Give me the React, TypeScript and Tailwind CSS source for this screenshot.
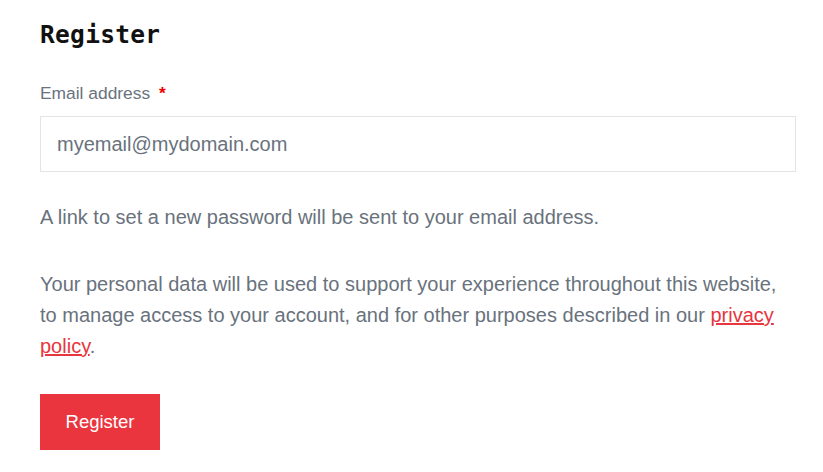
export default function App() {
  return (
    <div className="min-h-screen bg-white font-['Liberation_Sans',Arial,sans-serif] text-[#69727d]">
      <div className="w-[756px] pl-10 pt-[19px] box-content">
        <h2 className="font-['DejaVu_Sans_Mono',monospace] text-[24.5px] font-bold leading-[32px] tracking-[0.3px] text-[#111111]">
          Register
        </h2>

        <form className="mt-[30px]" onSubmit={(e) => e.preventDefault()}>
          <label className="block text-[17.4px] leading-[24px]">
            Email address <span className="ml-1 font-bold text-[#f00000]">*</span>
          </label>
          <input
            type="email"
            placeholder="myemail@mydomain.com"
            className="mt-[11px] block h-[56px] w-full border border-[#e2e4e8] px-4 text-[20px] text-[#69727d] placeholder:text-[#69727d] outline-none"
          />

          <p className="mt-[30px] text-[20px] leading-[31px]">
            A link to set a new password will be sent to your email address.
          </p>

          <p className="mt-[36px] text-[20px] leading-[31px]">
            Your personal data will be used to support your experience throughout this website, to manage access to your account, and for other purposes described in our{" "}
            <a href="#" className="text-[#e8353e] underline">
              privacy policy
            </a>
            .
          </p>

          <button
            type="submit"
            className="mt-[32px] h-[56px] w-[120px] bg-[#ea353e] text-[18.5px] text-white"
          >
            Register
          </button>
        </form>
      </div>
    </div>
  );
}
